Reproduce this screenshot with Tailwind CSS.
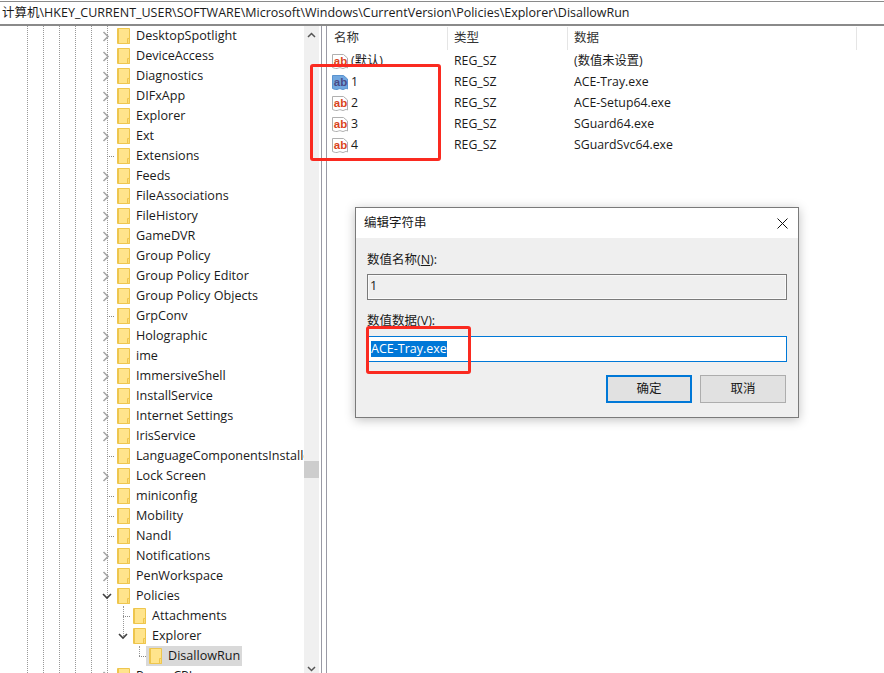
<!DOCTYPE html>
<html lang="en">
<head>
    <meta charset="UTF-8">
    <title>Registry Editor</title>
    <script src="https://cdn.jsdelivr.net/npm/@tailwindcss/browser@4"></script>
</head>
<body class="relative w-[884px] h-[673px] overflow-hidden bg-white text-[#1a1a1a] text-[12.6px] font-['Open_Sans','Noto_Sans_CJK_SC',sans-serif]">
    <!-- Address bar -->
    <div class="h-[25px] mt-px border-t border-[#8a8a8a] border-b-2 pl-[2px] flex items-center text-[12.5px]">计算机\HKEY_CURRENT_USER\SOFTWARE\Microsoft\Windows\CurrentVersion\Policies\Explorer\DisallowRun</div>

    <div class="flex h-[647px]">
        <!-- Tree -->
        <div class="relative w-[304px] overflow-hidden">
            <div id="guides"></div>
            <div id="tree"></div>
        </div>

        <!-- Scrollbar -->
        <div class="relative w-[15px] bg-[#f0f0f0]">
            <svg class="absolute left-[3px] top-[6px]" width="9" height="6" viewBox="0 0 9 6" fill="none" stroke="#555" stroke-width="1.5"><path d="M1 5l3.5-3.5L8 5" /></svg>
            <div class="absolute left-0 top-[435px] w-[15px] h-[17px] bg-[#cdcdcd]"></div>
            <svg class="absolute left-[3px] top-[640px]" width="9" height="6" viewBox="0 0 9 6" fill="none" stroke="#555" stroke-width="1.5"><path d="M1 1l3.5 3.5L8 1" /></svg>
        </div>

        <!-- Splitter -->
        <div class="w-[6px] ml-[2px] border-x border-[#9a9aa5]"></div>

        <!-- Values list -->
        <div class="flex-1">
            <div class="h-[25px] flex items-center text-[12.5px] text-[#333]">
                <div class="w-[121px] h-[23px] pl-[7px] flex items-center border-r border-[#e5e5e5]">名称</div>
                <div class="w-[120px] h-[23px] pl-[6px] flex items-center border-r border-[#e5e5e5]">类型</div>
                <div class="w-[289px] h-[23px] pl-[6px] flex items-center border-r border-[#e5e5e5]">数据</div>
            </div>
            <div id="values"></div>
        </div>
    </div>

    <!-- Edit string dialog -->
    <div class="absolute left-[355px] top-[207px] w-[444px] h-[211px] bg-[#efefef] border border-[#7a7a7a] shadow-[0_2px_10px_rgba(0,0,0,0.25)]">
        <div class="h-[30px] bg-white flex items-center justify-between pl-[8px] pr-[10px] text-[12.5px]">
            <span>编辑字符串</span>
            <svg width="11" height="11" viewBox="0 0 11 11" stroke="#111" stroke-width="1"><path d="M.5.5l10 10M10.5.5l-10 10" /></svg>
        </div>
        <div class="px-[11px]">
            <div class="mt-[13px] h-[18px] flex items-center text-[12.5px]">数值名称(<span class="underline">N</span>):</div>
            <div class="mt-[5px] h-[26px] border border-[#7a7a7a] flex items-center pl-[2px] pb-[2px] shadow-[inset_0_0_0_1px_#fafafa]">1</div>
            <div class="mt-[12px] h-[18px] flex items-center text-[12.5px]">数值数据(<span class="underline">V</span>):</div>
            <div class="mt-[6px] h-[26px] border border-[#0078d7] bg-white flex items-center pl-[3px]">
                <span class="bg-[#0078d7] text-white h-[16px] flex items-center text-[12.5px]">ACE-Tray.exe</span>
            </div>
            <div class="mt-[13px] flex justify-end gap-[8px] pr-px">
                <button class="w-[86px] h-[28px] bg-[#e1e1e1] border-2 border-[#0078d7] text-[12.5px]">确定</button>
                <button class="w-[86px] h-[28px] bg-[#e1e1e1] border border-[#adadad] text-[12.5px]">取消</button>
            </div>
        </div>
    </div>

    <!-- Red annotation boxes -->
    <div class="absolute left-[310px] top-[64px] w-[131px] h-[97px] border-[3px] border-[#fa2a20] rounded-[3px]"></div>
    <div class="absolute left-[366px] top-[326px] w-[105px] h-[48px] border-[3px] border-[#fa2a20] rounded-[3px]"></div>

    <script>
        const folder = `<svg width="13" height="16" viewBox="0 0 13 16" class="shrink-0"><path d="M.5.500h12v15H.5z" fill="#ffe48c" stroke="#eec64e"/><path d="M1 1h1v14H1z" fill="#eec64e"/><path d="M10.500 10.500h2v5h-2z" fill="#fddc78" stroke="#eec64e"/></svg>`;
        const closed = `<svg width="8" height="11" viewBox="0 0 8 11" fill="none" stroke="#a6a6a6" stroke-width="1.6"><path d="M1.500 1l4.500 4.500L1.500 10" /></svg>`;
        const open = `<svg width="10" height="7" viewBox="0 0 10 7" fill="none" stroke="#404040" stroke-width="1.6"><path d="M1 1l4 4 4-4" /></svg>`;
        const leaf = '<span class="block w-[7px] border-t border-dotted border-[#888] ml-[5px]"></span>';

        // name, indent level, expander
        const rows = [
            ['DesktopSpotlight', 0, 'c'], ['DeviceAccess', 0, 'c'], ['Diagnostics', 0, 'c'], ['DIFxApp', 0, 'c'],
            ['Explorer', 0, 'c'], ['Ext', 0, 'c'], ['Extensions', 0, ''], ['Feeds', 0, 'c'],
            ['FileAssociations', 0, 'c'], ['FileHistory', 0, 'c'], ['GameDVR', 0, 'c'], ['Group Policy', 0, 'c'],
            ['Group Policy Editor', 0, 'c'], ['Group Policy Objects', 0, 'c'], ['GrpConv', 0, ''], ['Holographic', 0, 'c'],
            ['ime', 0, 'c'], ['ImmersiveShell', 0, 'c'], ['InstallService', 0, 'c'], ['Internet Settings', 0, 'c'],
            ['IrisService', 0, 'c'], ['LanguageComponentsInstaller', 0, ''], ['Lock Screen', 0, 'c'], ['miniconfig', 0, ''],
            ['Mobility', 0, ''], ['NandI', 0, ''], ['Notifications', 0, 'c'], ['PenWorkspace', 0, 'c'],
            ['Policies', 0, 'o'], ['Attachments', 1, ''], ['Explorer', 1, 'o'], ['DisallowRun', 2, ''],
            ['PowerCPL', 0, 'c']
        ];

        document.getElementById('tree').innerHTML = rows.map(([name, level, exp], i) => {
            const icon = exp === 'c' ? closed : exp === 'o' ? open : leaf;
            const sel = name === 'DisallowRun';
            return `<div class="relative h-[20px] flex items-center pl-[102px]">
                <div class="w-[15px] flex items-center justify-start shrink-0" style="margin-left:${level * 16}px">${icon}</div>
                <div class="flex items-center h-[20px] ${sel ? 'bg-[#d9d9d9] pr-[2px] pl-[3px] -ml-[3px]' : ''}">${folder}<span class="ml-[6px] whitespace-nowrap">${name}</span></div>
            </div>`;
        }).join('');

        // dotted tree guide lines
        document.getElementById('guides').innerHTML = [27, 43, 59, 75, 91, 107].map(x =>
            `<div class="absolute top-0 h-full border-l border-dotted border-[#999]" style="left:${x}px"></div>`
        ).join('') +
            `<div class="absolute left-[123px] top-[580px] h-[30px] border-l border-dotted border-[#999]"></div>
             <div class="absolute left-[139px] top-[620px] h-[10px] border-l border-dotted border-[#999]"></div>`;

        const ab = (sel) => `<svg width="17" height="17" viewBox="0 0 17 17" class="shrink-0"><path d="M.5 1.500h11l4 3.500v10c-2-1.500-3 .5-4.500.5s-2.500-1.500-4.500-.5-3.500.5-6-.5z" fill="${sel ? '#72a8e0' : '#fff'}" stroke="${sel ? '#5a93cf' : '#b0b0b0'}"/><text x="1.800" y="11.500" font-size="11.500" font-weight="700" font-family="Liberation Sans" fill="${sel ? '#4a4a86' : '#d9441c'}">ab</text></svg>`;

        const values = [
            ['(默认)', '(数值未设置)'], ['1', 'ACE-Tray.exe'], ['2', 'ACE-Setup64.exe'],
            ['3', 'SGuard64.exe'], ['4', 'SGuardSvc64.exe']
        ];
        document.getElementById('values').innerHTML = values.map(([name, data], i) =>
            `<div class="h-[21px] flex items-center text-[12.3px]">
                <div class="w-[121px] pl-[5px] flex items-center">${ab(i === 1)}<span class="ml-[2px]">${name}</span></div>
                <div class="w-[120px] pl-[6px]">REG_SZ</div>
                <div class="pl-[6px]">${data}</div>
            </div>`
        ).join('');
    </script>
</body>
</html>
